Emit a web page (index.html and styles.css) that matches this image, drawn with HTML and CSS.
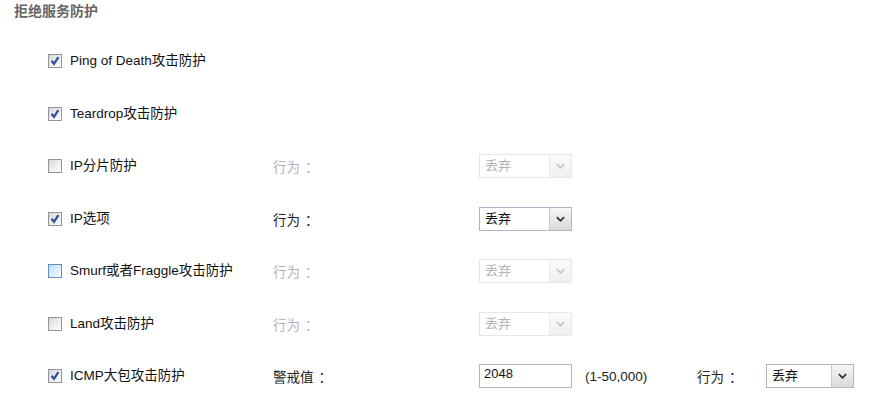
FILE: index.html
```html
<!DOCTYPE html>
<html lang="zh">
<head>
<meta charset="utf-8">
<link rel="stylesheet" href="styles.css">
</head>
<body>
<div class="page">
  <div class="title">拒绝服务防护</div>
  <div class="list">
    <div class="row">
      <div class="c1"><span class="cb checked"><svg viewBox="0 0 13 13"><path d="M2.8 6.2 L5.4 9.6 L10.2 2.2" /></svg></span><span class="lbl">Ping of Death攻击防护</span></div>
    </div>
    <div class="row">
      <div class="c1"><span class="cb checked"><svg viewBox="0 0 13 13"><path d="M2.8 6.2 L5.4 9.6 L10.2 2.2" /></svg></span><span class="lbl">Teardrop攻击防护</span></div>
    </div>
    <div class="row">
      <div class="c1"><span class="cb"></span><span class="lbl">IP分片防护</span></div>
      <div class="c2 dis">行为<span class="colon">：</span></div>
      <div class="sel dis"><span class="val">丢弃</span><span class="btn"><svg viewBox="0 0 10 6"><path d="M1 1 L5 5 L9 1" /></svg></span></div>
    </div>
    <div class="row">
      <div class="c1"><span class="cb checked"><svg viewBox="0 0 13 13"><path d="M2.8 6.2 L5.4 9.6 L10.2 2.2" /></svg></span><span class="lbl">IP选项</span></div>
      <div class="c2">行为<span class="colon">：</span></div>
      <div class="sel"><span class="val">丢弃</span><span class="btn"><svg viewBox="0 0 10 6"><path d="M1 1 L5 5 L9 1" /></svg></span></div>
    </div>
    <div class="row">
      <div class="c1"><span class="cb hover"></span><span class="lbl">Smurf或者Fraggle攻击防护</span></div>
      <div class="c2 dis">行为<span class="colon">：</span></div>
      <div class="sel dis"><span class="val">丢弃</span><span class="btn"><svg viewBox="0 0 10 6"><path d="M1 1 L5 5 L9 1" /></svg></span></div>
    </div>
    <div class="row">
      <div class="c1"><span class="cb"></span><span class="lbl">Land攻击防护</span></div>
      <div class="c2 dis">行为<span class="colon">：</span></div>
      <div class="sel dis"><span class="val">丢弃</span><span class="btn"><svg viewBox="0 0 10 6"><path d="M1 1 L5 5 L9 1" /></svg></span></div>
    </div>
    <div class="row">
      <div class="c1"><span class="cb checked"><svg viewBox="0 0 13 13"><path d="M2.8 6.2 L5.4 9.6 L10.2 2.2" /></svg></span><span class="lbl">ICMP大包攻击防护</span></div>
      <div class="c2">警戒值<span class="colon">：</span></div>
      <div class="inp">2048</div>
      <div class="range">(1-50,000)</div>
      <div class="c3">行为<span class="colon">：</span></div>
      <div class="sel small"><span class="val">丢弃</span><span class="btn"><svg viewBox="0 0 10 6"><path d="M1 1 L5 5 L9 1" /></svg></span></div>
    </div>
  </div>
</div>
</body>
</html>
```
FILE: styles.css
```css
html, body {
  margin: 0;
  padding: 0;
  background: #fff;
}
body {
  font-family: "Liberation Sans", Arial, "Noto Sans CJK SC", sans-serif;
  font-size: 13.5px;
  color: #222;
}
.page {
  width: 894px;
  height: 403px;
  overflow: hidden;
}
.title {
  padding: 3px 0 0 14px;
  height: 32px;
  line-height: 16px;
  font-size: 14px;
  font-weight: bold;
  color: #666;
}
.list {
  padding-left: 48px;
}
.row {
  height: 52.5px;
  display: flex;
  align-items: center;
}
.c1 {
  width: 225px;
  display: flex;
  align-items: center;
}
.cb {
  width: 14px;
  height: 14px;
  box-sizing: border-box;
  border: 1px solid #959595;
  background: linear-gradient(135deg, #d6d6d6 0%, #efefef 55%, #fbfbfb 100%);
  display: inline-flex;
  align-items: center;
  justify-content: center;
  margin-right: 8px;
  flex: none;
}
.cb svg {
  width: 12px;
  height: 12px;
}
.cb svg path {
  fill: none;
  stroke: #30509f;
  stroke-width: 2.4;
}
.cb.hover {
  border-color: #5e90bd;
  background: linear-gradient(135deg, #bedcf7 0%, #def0fe 55%, #f2f9ff 100%);
}
.lbl {
  line-height: 16px;
  color: #111;
}
.colon {
  display: inline-block;
  width: 14px;
  padding-left: 5px;
  box-sizing: border-box;
  white-space: nowrap;
}
.c2 {
  width: 206px;
  color: #222;
}
.c2.dis {
  color: #b4b4b4;
}
.sel {
  width: 93px;
  height: 24px;
  box-sizing: border-box;
  border: 1px solid #b1b5c8;
  display: flex;
  background: #fff;
  font-size: 13px;
}
.sel .val {
  flex: 1;
  padding-left: 5px;
  line-height: 22px;
  color: #111;
}
.sel .btn {
  width: 21px;
  border-left: 1px solid #c8cad6;
  background: linear-gradient(#f6f6f6, #dadada);
  display: flex;
  align-items: center;
  justify-content: center;
}
.sel .btn svg {
  width: 9px;
  height: 6px;
}
.sel .btn svg path {
  fill: none;
  stroke: #333;
  stroke-width: 2;
}
.sel.dis {
  border-color: #e6e7ee;
}
.sel.dis .val {
  color: #b4b4b4;
}
.sel.dis .btn {
  border-left-color: #ececf0;
  background: linear-gradient(#fbfbfb, #efefef);
}
.sel.dis .btn svg path {
  stroke: #c4c4c4;
}
.sel.small {
  width: 88px;
}
.inp {
  width: 93px;
  height: 24px;
  box-sizing: border-box;
  border: 1px solid #b1b5c8;
  padding-left: 4px;
  line-height: 18px;
  font-size: 13px;
  color: #111;
}
.range {
  margin-left: 13px;
  width: 112px;
}
.c3 {
  width: 69px;
}
```
